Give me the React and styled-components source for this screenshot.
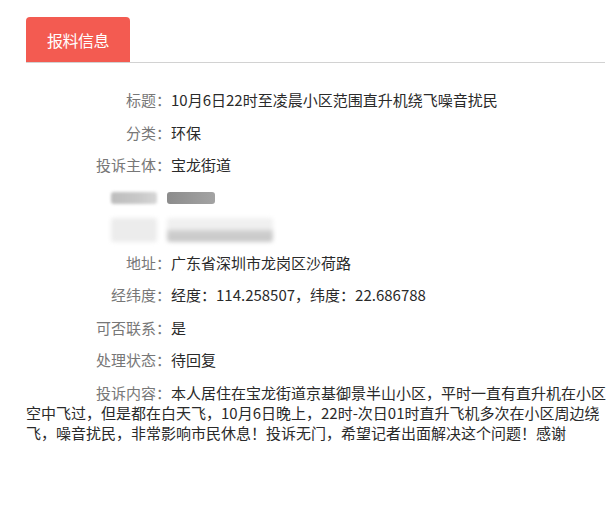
import React from "react";
import styled, { createGlobalStyle } from "styled-components";

const GlobalStyle = createGlobalStyle`
  html, body { margin: 0; padding: 0; background: #fff; }
  body {
    font-family: "Noto Sans CJK SC", "Microsoft YaHei", "Noto Sans", sans-serif;
  }
`;

const Page = styled.div`
  width: 579px;
  padding: 17px 0 0 26px;
`;

const TabBar = styled.div`
  display: flex;
  align-items: flex-end;
  border-bottom: 1px solid #d2d2d2;
`;

const Tab = styled.div`
  width: 104px;
  height: 45px;
  background: #f35b51;
  color: #fff;
  font-size: 16px;
  border-radius: 4px 4px 0 0;
  display: flex;
  align-items: center;
  justify-content: center;
  letter-spacing: -0.5px;
`;

const Content = styled.div`
  padding-top: 21px;
  font-size: 15px;
`;

const Row = styled.div`
  display: flex;
  align-items: center;
  height: 32.5px;
  line-height: 32.5px;
`;

const Label = styled.span`
  display: inline-block;
  width: 145px;
  flex-shrink: 0;
  text-align: right;
  color: #777;
`;

const Value = styled.span`
  color: #2a2a2a;
`;

const Blur = styled.span`
  display: inline-block;
  width: ${(p) => p.$w}px;
  height: ${(p) => p.$h}px;
  margin-left: ${(p) => p.$ml || 0}px;
  background: ${(p) => p.$bg};
  filter: blur(${(p) => p.$blur || 1.5}px);
  border-radius: 3px;
`;

const BlurLabelWrap = styled.span`
  display: flex;
  justify-content: flex-end;
  width: 131px;
  flex-shrink: 0;
  margin-right: 12px;
`;

const Paragraph = styled.p`
  margin: 6.5px 0 0;
  line-height: 20px;
  color: #2a2a2a;
  white-space: nowrap;
`;

const InlineLabel = styled.span`
  display: inline-block;
  width: 145px;
  text-align: right;
  color: #777;
`;

const rows = [
  ["标题：", "10月6日22时至凌晨小区范围直升机绕飞噪音扰民"],
  ["分类：", "环保"],
  ["投诉主体：", "宝龙街道"],
];

const rows2 = [
  ["地址：", "广东省深圳市龙岗区沙荷路"],
  ["经纬度：", "经度：114.258507，纬度：22.686788"],
  ["可否联系：", "是"],
  ["处理状态：", "待回复"],
];

export default function App() {
  return (
    <>
      <GlobalStyle />
      <Page>
        <TabBar>
          <Tab>报料信息</Tab>
        </TabBar>
        <Content>
          {rows.map(([l, v]) => (
            <Row key={l}>
              <Label>{l}</Label>
              <Value>{v}</Value>
            </Row>
          ))}
          <Row>
            <BlurLabelWrap>
              <Blur $w={46} $h={12} $bg="linear-gradient(90deg,#bdbdbd,#c8c8c8 60%,#d6d6d6)" />
            </BlurLabelWrap>
            <Blur $w={48} $h={12} $bg="linear-gradient(90deg,#8c8c8c,#a3a3a3)" $blur={0.6} $ml={-2} />
          </Row>
          <Row>
            <BlurLabelWrap>
              <Blur $w={46} $h={24} $bg="#ececec" $blur={2} />
            </BlurLabelWrap>
            <Blur
              $w={106}
              $h={24}
              $ml={-2}
              $bg="linear-gradient(180deg,#f0f0f0 0%,#f0f0f0 45%,#cfcfcf 55%,#c8c8c8 100%)"
              $blur={2}
            />
          </Row>
          {rows2.map(([l, v]) => (
            <Row key={l}>
              <Label>{l}</Label>
              <Value>{v}</Value>
            </Row>
          ))}
          <Paragraph>
            <InlineLabel>投诉内容：</InlineLabel>
            本人居住在宝龙街道京基御景半山小区，平时一直有直升机在小区
            <br />
            空中飞过，但是都在白天飞，10月6日晚上，22时-次日01时直升飞机多次在小区周边绕
            <br />
            飞，噪音扰民，非常影响市民休息！投诉无门，希望记者出面解决这个问题！感谢
          </Paragraph>
        </Content>
      </Page>
    </>
  );
}
